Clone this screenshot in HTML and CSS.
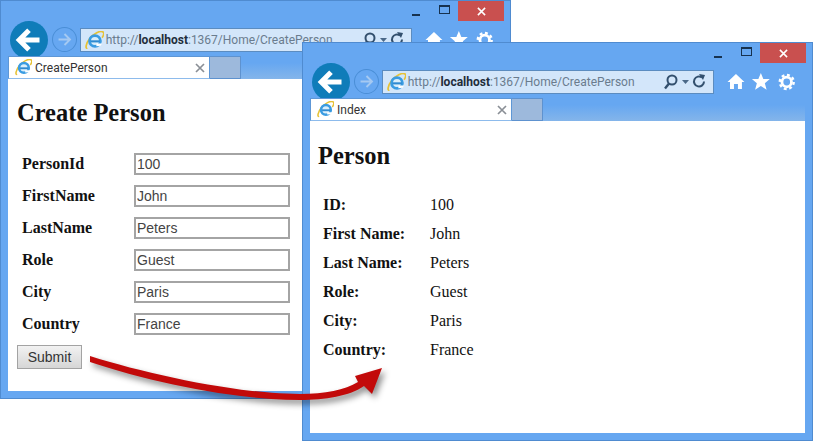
FILE: index.html
```html
<!DOCTYPE html>
<html>
<head>
  <meta charset="UTF-8">
  <title>Create Person</title>
  <link rel="stylesheet" href="styles.css">
</head>
<body>
  <svg class="defs" width="0" height="0">
    <symbol id="ie" viewBox="0 0 20 20">
      <path d="M2.500 18C0 19 1 13 5 8c4-5 11-9 14-7 1.500 1 .5 4-1 6" fill="none" stroke="#e6c236" stroke-width="1.800"/>
      <circle cx="10.500" cy="10.500" r="5.700" fill="#d9eefb" stroke="#3a9ce2" stroke-width="3"/>
      <path d="M6 9.800h9.500v2.200H6z" fill="#2f8ad0"/>
      <path d="M12 13.200h6l-1.500 2.300-4.500.5z" fill="#fff"/>
    </symbol>
    <symbol id="arrow" viewBox="0 0 20 20">
      <path d="M17 10H4M10 3.500 3.500 10l6.500 6.500" fill="none" stroke="currentColor" stroke-width="3.400"/>
    </symbol>
    <symbol id="arrow-thin" viewBox="0 0 20 20">
      <path d="M3 10h13M10 3.500l6.500 6.500-6.500 6.500" fill="none" stroke="currentColor" stroke-width="2.200"/>
    </symbol>
    <symbol id="close" viewBox="0 0 10 10">
      <path d="M1 1l8 8M9 1 1 9" fill="none" stroke="currentColor" stroke-width="1.700"/>
    </symbol>
    <symbol id="addr-tools" viewBox="0 0 52 18">
      <circle cx="15" cy="7" r="4.500" fill="none" stroke="#33506e" stroke-width="2"/>
      <path d="M12 10.500l-4 5" stroke="#33506e" stroke-width="2.400"/>
      <path d="M25 7h7l-3.500 4z" fill="#4a6888"/>
      <path d="M45 4.500a5 5 0 1 0 2 4" fill="none" stroke="#33506e" stroke-width="2"/>
      <path d="M42 1l6 1-2 5z" fill="#33506e"/>
    </symbol>
    <symbol id="tools" viewBox="0 0 78 20">
      <path d="M9 2 0.500 10H3v7h4v-5h4v5h4v-7h2.500z" fill="#fff"/>
      <path d="M34 1l2.500 6h6.500l-5 4.200 1.800 6.500L34 14l-5.800 3.700 1.800-6.500-5-4.200h6.500z" fill="#fff"/>
      <circle cx="60" cy="10" r="4.800" fill="none" stroke="#fff" stroke-width="2.800"/>
      <circle cx="60" cy="10" r="7" fill="none" stroke="#fff" stroke-width="2.400" stroke-dasharray="2.900 2.600"/>
    </symbol>
  </svg>

  <div class="window window-back">
    <div class="caption">
      <span class="cap-btn"><i class="min"></i></span>
      <span class="cap-btn"><i class="max"></i></span>
      <span class="cap-close"><svg width="9" height="9"><use href="#close"/></svg></span>
    </div>
    <div class="toolbar">
      <span class="back"><svg width="30" height="30"><use href="#arrow"/></svg></span>
      <span class="forward"><svg width="17" height="17"><use href="#arrow-thin"/></svg></span>
      <div class="address">
        <svg class="ie-big" width="19" height="19"><use href="#ie"/></svg>
        <span class="url">http://<b>localhost</b>:1367/Home/CreatePerson</span>
        <svg class="addr-tools" width="52" height="18"><use href="#addr-tools"/></svg>
      </div>
      <svg class="tools" width="78" height="20"><use href="#tools"/></svg>
    </div>
    <div class="tabs">
      <div class="tab">
        <svg width="17" height="17"><use href="#ie"/></svg>
        <span class="tab-title">CreatePerson</span>
        <svg class="tab-x" width="10" height="10"><use href="#close"/></svg>
      </div>
      <div class="tab-new"></div>
      <div class="tabs-fill"></div>
    </div>
    <div class="content">
      <h1 class="form-title">Create Person</h1>
      <form class="person-form">
        <label for="personId">PersonId</label>
        <input id="personId" type="text" value="100">
        <label for="firstName">FirstName</label>
        <input id="firstName" type="text" value="John">
        <label for="lastName">LastName</label>
        <input id="lastName" type="text" value="Peters">
        <label for="role">Role</label>
        <input id="role" type="text" value="Guest">
        <label for="city">City</label>
        <input id="city" type="text" value="Paris">
        <label for="country">Country</label>
        <input id="country" type="text" value="France">
        <button type="button">Submit</button>
      </form>
    </div>
  </div>

  <div class="window window-front">
    <div class="caption">
      <span class="cap-btn"><i class="min"></i></span>
      <span class="cap-btn"><i class="max"></i></span>
      <span class="cap-close"><svg width="9" height="9"><use href="#close"/></svg></span>
    </div>
    <div class="toolbar">
      <span class="back"><svg width="30" height="30"><use href="#arrow"/></svg></span>
      <span class="forward"><svg width="17" height="17"><use href="#arrow-thin"/></svg></span>
      <div class="address">
        <svg class="ie-big" width="19" height="19"><use href="#ie"/></svg>
        <span class="url">http://<b>localhost</b>:1367/Home/CreatePerson</span>
        <svg class="addr-tools" width="52" height="18"><use href="#addr-tools"/></svg>
      </div>
      <svg class="tools" width="78" height="20"><use href="#tools"/></svg>
    </div>
    <div class="tabs">
      <div class="tab">
        <svg width="17" height="17"><use href="#ie"/></svg>
        <span class="tab-title">Index</span>
        <svg class="tab-x" width="10" height="10"><use href="#close"/></svg>
      </div>
      <div class="tab-new"></div>
      <div class="tabs-fill"></div>
    </div>
    <div class="content content-detail">
      <h1 class="detail-title">Person</h1>
      <dl class="details">
        <dt>ID:</dt><dd>100</dd>
        <dt>First Name:</dt><dd>John</dd>
        <dt>Last Name:</dt><dd>Peters</dd>
        <dt>Role:</dt><dd>Guest</dd>
        <dt>City:</dt><dd>Paris</dd>
        <dt>Country:</dt><dd>France</dd>
      </dl>
    </div>
  </div>

  <svg class="flow-arrow" width="813" height="441" viewBox="0 0 813 441">
    <path d="M90 356C150 375 240 394 300 394C325 394 345 390 358 382L355 376L382 368L372 394L364 386C350 396 325 400 300 400C235 400 150 382 90 362Z" fill="#c20a0a"/>
  </svg>
</body>
</html>
```

FILE: styles.css
```css
body {
  margin: 0;
  height: 441px;
  overflow: hidden;
  position: relative;
  background: #fff;
  font-family: "Liberation Serif", serif;
}
.defs {
  position: absolute;
}

/* browser windows sit on a free canvas */
.window {
  position: absolute;
  width: 511px;
  height: 399px;
  box-sizing: border-box;
  padding: 0 7px 7px;
  display: flex;
  flex-direction: column;
  background: #66a7f1;
  border: 1px solid #4f8bd0;
}
.window-back {
  left: 0;
  top: 0;
}
.window-front {
  left: 302px;
  top: 42px;
}

.caption {
  height: 20px;
  margin-right: -1px;
  display: flex;
  justify-content: flex-end;
}
.cap-btn {
  width: 28px;
  height: 20px;
  display: flex;
  align-items: center;
  justify-content: center;
}
.min {
  width: 8px;
  height: 2px;
  margin-top: 7px;
  background: #17324f;
}
.max {
  width: 9px;
  height: 6px;
  margin-top: -3px;
  border: 1px solid #17324f;
  border-top-width: 2px;
}
.cap-close {
  width: 46px;
  height: 20px;
  display: flex;
  align-items: center;
  justify-content: center;
  color: #fff;
  background: #c9504f;
}

.toolbar {
  height: 35px;
  display: flex;
  align-items: flex-start;
}
.back {
  width: 38px;
  height: 38px;
  margin-left: 2px;
  margin-bottom: -3px;
  border-radius: 50%;
  display: flex;
  align-items: center;
  justify-content: center;
  color: #fff;
  background: #0f7cb9;
}
.forward {
  width: 23px;
  height: 23px;
  margin: 6px 0 0 4px;
  border: 1px solid #4a8ed6;
  border-radius: 50%;
  display: flex;
  align-items: center;
  justify-content: center;
  color: #a5c9f2;
}
.address {
  width: 334px;
  height: 24px;
  box-sizing: border-box;
  margin: 7px 0 0 3px;
  padding: 0 4px 0 4px;
  display: flex;
  align-items: center;
  background: #d3e6fa;
  border: 1px solid #5b8cc0;
}
.ie-big {
  flex-shrink: 0;
}
.url {
  margin-left: 2px;
  font: 12px Roboto, sans-serif;
  color: #6a7c8e;
  white-space: nowrap;
}
.url b {
  color: #1f2d3a;
}
.addr-tools {
  flex-shrink: 0;
  margin-left: auto;
}
.tools {
  margin: 9px 0 0 13px;
}

.tabs {
  height: 23px;
  display: flex;
}
.tab {
  position: relative;
  width: 202px;
  box-sizing: border-box;
  padding: 0 4px 0 6px;
  display: flex;
  align-items: center;
  background: #fff;
  border: 1px solid #5e97d6;
  border-bottom-color: #8dbbec;
}
.tab-title {
  margin-left: 3px;
  font: 12px Roboto, sans-serif;
  color: #333;
}
.tab-x {
  margin-left: auto;
  color: #8a8f96;
}
.tab-new {
  width: 30px;
  background: #9db9dc;
  border: 1px solid #5e92cf;
  border-left: none;
}
.tabs-fill {
  flex: 1;
  background: linear-gradient(#66a7f1 30%, #84b5ea);
}

.content {
  flex: 1;
  padding-left: 9px;
  background: #fff;
  color: #111;
}
.content-detail {
  padding-left: 8px;
}
h1 {
  margin: 20px 0 0;
  font-size: 24.500px;
  line-height: 28px;
}
.form-title {
  margin-bottom: 26px;
}
.detail-title {
  margin-top: 21px;
  margin-bottom: 20px;
}

.person-form {
  display: grid;
  grid-template-columns: 117px 156px;
  row-gap: 10px;
}
.person-form label {
  padding-left: 5px;
  font-size: 16px;
  font-weight: bold;
  line-height: 21px;
}
.person-form input {
  height: 22px;
  box-sizing: border-box;
  padding: 0 1px;
  font: 14px "Liberation Sans", sans-serif;
  color: #444;
  border: 2px solid #a4a4a4;
  outline: none;
}
.person-form button {
  width: 65px;
  height: 24px;
  padding: 0;
  font: 14px "Liberation Sans", sans-serif;
  color: #333;
  background: linear-gradient(#f2f2f2, #d6d6d6);
  border: 1px solid #a3a3a3;
}

.details {
  margin: 0 0 0 5px;
  display: grid;
  grid-template-columns: 107px auto;
  grid-auto-rows: 29px;
  align-items: center;
  font-size: 16px;
}
.details dt {
  font-weight: bold;
}
.details dd {
  margin: 0;
}

.flow-arrow {
  position: absolute;
  left: 0;
  top: 0;
  filter: drop-shadow(3px 4px 3px rgba(0, 0, 0, 0.45));
}
```
